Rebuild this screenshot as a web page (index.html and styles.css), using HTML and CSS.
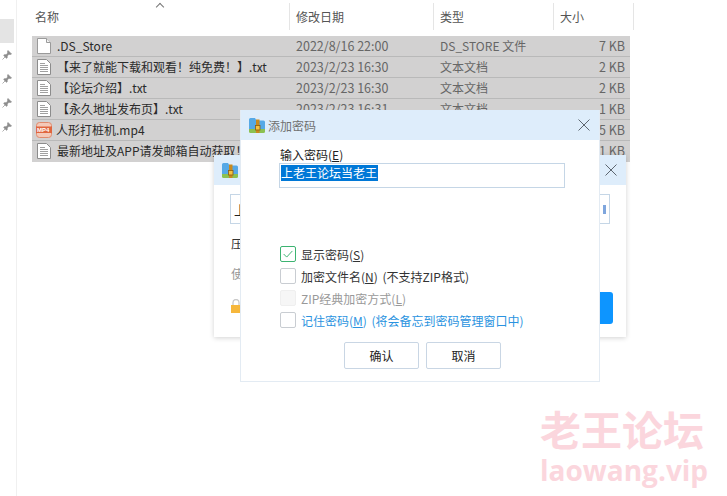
FILE: index.html
```html
<!DOCTYPE html>
<html lang="zh-CN">
<head>
    <meta charset="UTF-8">
    <title>添加密码</title>
    <link rel="stylesheet" href="styles.css">
</head>
<body>
    <svg class="defs" width="0" height="0">
        <symbol id="blank" viewBox="0 0 14 16">
            <path d="M.5.5h9l4 4v11H.5z" fill="#fff" stroke="#9a9a9a"/>
            <path d="M9.5.5v4h4" fill="#f2f2f2" stroke="#9a9a9a"/>
        </symbol>
        <symbol id="txt" viewBox="0 0 14 16">
            <path d="M.5.5h9l4 4v11H.5z" fill="#fff" stroke="#8c8c8c"/>
            <path d="M3 4.500h5M3 6.500h8M3 8.500h8M3 10.500h8M3 12.500h8" stroke="#a0a0a0"/>
        </symbol>
        <symbol id="zip" viewBox="0 0 16 15">
            <path d="M0 1.500Q0 0 1.500 0H6l1.500 2.500H14.500Q16 2.500 16 4v9H0z" fill="#56a9e6"/>
            <path d="M0 11h16v2.500Q16 15 14.500 15H1.500Q0 15 0 13.500z" fill="#8cc152"/>
            <rect x="7" y="1.500" width="3.500" height="13.500" fill="#c98a1e"/>
            <rect x="6.500" y="7.500" width="4.500" height="4.500" fill="#f5c242" stroke="#8a5a10" stroke-width=".8"/>
        </symbol>
        <symbol id="pin" viewBox="0 0 10 10">
            <path d="M6 .5 9.500 4 8.500 4.500 7 4.200 5.200 6 5.200 7.800 4.500 8.300 1.700 5.500 2.200 4.800H4L5.800 3 5.500 1.500zM3 7 .5 9.500" fill="#8d8d8d" stroke="#8d8d8d" stroke-width=".7"/>
        </symbol>
        <symbol id="close" viewBox="0 0 12 12">
            <path d="M.5.5l11 11M11.500.5l-11 11" fill="none" stroke="#5d6670"/>
        </symbol>
    </svg>

    <div class="explorer">
        <aside class="quick-bar">
            <div class="quick-active"></div>
            <svg class="pin"><use href="#pin"/></svg>
            <svg class="pin"><use href="#pin"/></svg>
            <svg class="pin"><use href="#pin"/></svg>
            <svg class="pin"><use href="#pin"/></svg>
        </aside>
        <main class="listing">
            <div class="col-heads">
                <span class="head col-name">名称<i class="sort-arrow"></i></span>
                <span class="head col-date">修改日期</span>
                <span class="head col-type">类型</span>
                <span class="head col-size">大小</span>
            </div>
            <ul class="files">
                <li class="file">
                    <span class="col-name name"><svg class="file-icon"><use href="#blank"/></svg>.DS_Store</span>
                    <span class="col-date">2022/8/16 22:00</span>
                    <span class="col-type">DS_STORE 文件</span>
                    <span class="col-size">7 KB</span>
                </li>
                <li class="file">
                    <span class="col-name name"><svg class="file-icon"><use href="#txt"/></svg>【来了就能下载和观看！纯免费！】.txt</span>
                    <span class="col-date">2023/2/23 16:30</span>
                    <span class="col-type">文本文档</span>
                    <span class="col-size">2 KB</span>
                </li>
                <li class="file">
                    <span class="col-name name"><svg class="file-icon"><use href="#txt"/></svg>【论坛介绍】.txt</span>
                    <span class="col-date">2023/2/23 16:30</span>
                    <span class="col-type">文本文档</span>
                    <span class="col-size">2 KB</span>
                </li>
                <li class="file">
                    <span class="col-name name"><svg class="file-icon"><use href="#txt"/></svg>【永久地址发布页】.txt</span>
                    <span class="col-date">2023/2/23 16:31</span>
                    <span class="col-type">文本文档</span>
                    <span class="col-size">1 KB</span>
                </li>
                <li class="file">
                    <span class="col-name name"><svg class="file-icon mp4-icon" viewBox="0 0 16 16"><rect x=".5" y=".5" width="15" height="15" rx="3" fill="#f4c9b8" stroke="#e08a6c"/><rect x="0" y="4.500" width="16" height="6.500" fill="#e0663f"/></svg><b class="mp4-tag">MP4</b>人形打桩机.mp4</span>
                    <span class="col-date">2023/2/23 16:30</span>
                    <span class="col-type">MP4 文件</span>
                    <span class="col-size">5 KB</span>
                </li>
                <li class="file">
                    <span class="col-name name"><svg class="file-icon"><use href="#txt"/></svg>最新地址及APP请发邮箱自动获取！</span>
                    <span class="col-date">2023/2/23 16:30</span>
                    <span class="col-type">文本文档</span>
                    <span class="col-size">1 KB</span>
                </li>
            </ul>
        </main>
    </div>

    <!-- archive window, mostly hidden behind the password dialog -->
    <section class="window back-window">
        <header class="title-bar">
            <svg class="zip-icon"><use href="#zip"/></svg>
            <svg class="close-icon"><use href="#close"/></svg>
        </header>
        <div class="back-body">
            <div class="back-input"><span>上</span><i class="back-mark"></i></div>
            <p class="back-line">压</p>
            <p class="back-line muted">使</p>
            <div class="back-foot">
                <svg class="lock" viewBox="0 0 10 14"><path d="M2 6V3.500a3 3 0 0 1 6 0V6" fill="none" stroke="#c9c9c9" stroke-width="1.300"/><rect y="6" width="10" height="8" fill="#f6b73c"/></svg>
                <div class="back-btn"></div>
            </div>
        </div>
    </section>

    <section class="window pwd-window">
        <header class="title-bar">
            <svg class="zip-icon"><use href="#zip"/></svg>
            <span class="title">添加密码</span>
            <svg class="close-icon"><use href="#close"/></svg>
        </header>
        <div class="pwd-body">
            <label class="pwd-label">输入密码(<u>E</u>)</label>
            <div class="pwd-input"><span class="selected">上老王论坛当老王</span></div>
            <div class="options">
                <label class="option">
                    <span class="box checked"><svg viewBox="0 0 16 16" width="14" height="14"><path d="M3 8l3.500 3.500L13 4.500" fill="none" stroke="#3cb371" stroke-width="1.100"/></svg></span>
                    <span>显示密码(<u>S</u>)</span>
                </label>
                <label class="option">
                    <span class="box"></span>
                    <span>加密文件名(<u>N</u>) (不支持ZIP格式)</span>
                </label>
                <label class="option disabled">
                    <span class="box"></span>
                    <span>ZIP经典加密方式(<u>L</u>)</span>
                </label>
                <label class="option link">
                    <span class="box"></span>
                    <span>记住密码(<u>M</u>) (将会备忘到密码管理窗口中)</span>
                </label>
            </div>
            <div class="actions">
                <button class="btn">确认</button>
                <button class="btn">取消</button>
            </div>
        </div>
    </section>

    <div class="stamp">
        <div class="stamp-cn">老王论坛</div>
        <div class="stamp-en">laowang.vip</div>
    </div>
</body>
</html>
```

FILE: styles.css
```css
* {
    box-sizing: border-box;
}
html, body {
    height: 100%;
}
body {
    margin: 0;
    background: #fff;
    font-family: "Noto Sans CJK SC", "Noto Sans", sans-serif;
    font-size: 12px;
    color: #333;
    overflow: hidden;
    position: relative;
}
.defs {
    position: absolute;
}

/* explorer behind the dialogs */
.explorer {
    display: flex;
    height: 100%;
}
.quick-bar {
    width: 17px;
    padding-top: 19px;
    border-right: 1px solid #f0f0f0;
    display: flex;
    flex-direction: column;
    flex-shrink: 0;
}
.quick-active {
    width: 14px;
    height: 24px;
    background: #e4e4e4;
    margin-bottom: 7px;
}
.pin {
    width: 10px;
    height: 10px;
    margin: 0 0 14px 2px;
}
.listing {
    margin-left: 15px;
    width: 602px;
}
.col-heads {
    display: flex;
    height: 36px;
    padding-top: 3px;
}
.head {
    position: relative;
    height: 27px;
    line-height: 28px;
    border-right: 1px solid #e5e5e5;
    color: #555;
}
.col-name {
    width: 258px;
    flex-shrink: 0;
}
.col-date {
    width: 144px;
    padding-left: 6px;
    flex-shrink: 0;
}
.col-type {
    width: 120px;
    padding-left: 6px;
    flex-shrink: 0;
}
.col-size {
    width: 80px;
    padding-left: 6px;
    flex-shrink: 0;
}
.head.col-name {
    padding-left: 3px;
}
.sort-arrow {
    position: absolute;
    left: 125px;
    top: 1px;
    width: 6px;
    height: 6px;
    border-left: 1px solid #777;
    border-top: 1px solid #777;
    transform: rotate(45deg);
}
.files {
    list-style: none;
    margin: 0;
    padding: 0;
    width: 598px;
}
.file {
    display: flex;
    height: 21px;
    line-height: 20px;
    background: #d2d1d1;
    border-bottom: 1px solid #b9b9b9;
    color: #666;
}
.file:last-child {
    border-bottom: 0;
}
.file .col-date {
    font-size: 12.500px;
}
.file .col-size {
    width: 76px;
    padding: 0 5px 0 0;
    font-size: 12.500px;
    text-align: right;
}
.name {
    display: flex;
    align-items: center;
    height: 20px;
    color: #2b2b2b;
    position: relative;
}
.file-icon {
    width: 14px;
    height: 16px;
    margin: 0 6px 0 5px;
    flex-shrink: 0;
}
.mp4-icon {
    width: 16px;
    margin: 0 4px 0 4px;
}
.mp4-tag {
    position: absolute;
    left: 5px;
    font-family: "Liberation Sans", sans-serif;
    font-size: 6px;
    line-height: 8px;
    color: #fff;
}

/* dialogs */
.window {
    position: absolute;
    background: #fff;
}
.back-window {
    left: 214px;
    top: 155px;
    width: 412px;
    height: 182px;
    box-shadow: 0 1px 5px rgba(0, 0, 0, 0.18);
}
.pwd-window {
    left: 240px;
    top: 110px;
    width: 360px;
    height: 272px;
    border: 1px solid #e3ebf3;
    border-top: 0;
}
.title-bar {
    display: flex;
    align-items: center;
    height: 30px;
    padding: 0 9px 0 8px;
    background: #deedfb;
}
.zip-icon {
    width: 16px;
    height: 15px;
}
.title {
    margin-left: 3px;
    font-size: 12px;
    color: #707070;
}
.close-icon {
    width: 12px;
    height: 12px;
    margin-left: auto;
}
.back-body {
    padding: 9px 16px 0;
}
.back-input {
    display: flex;
    justify-content: space-between;
    align-items: center;
    height: 30px;
    border: 1px solid #c5d6e6;
    padding: 0 1px 0 3px;
    font-size: 13px;
    color: #222;
}
.back-mark {
    width: 3px;
    height: 9px;
    background: #7fa6dd;
    margin-right: 2px;
}
.back-line {
    margin: 10px 0 0 1px;
    line-height: 19px;
    font-size: 12.500px;
}
.back-line.muted {
    margin-top: 11px;
    color: #999;
}
.back-foot {
    display: flex;
    justify-content: space-between;
    margin: 0 -3px 0 1px;
}
.lock {
    width: 10px;
    height: 14px;
    margin-top: 16px;
}
.back-btn {
    width: 40px;
    height: 32px;
    margin-top: 9px;
    border-radius: 3px;
    background: #0d95ff;
}

.pwd-body {
    padding: 6px 34px 0 39px;
}
.pwd-label {
    display: block;
    line-height: 18px;
    font-size: 12px;
    color: #222;
}
.pwd-input {
    height: 25px;
    margin: -1px 0 0 -1px;
    padding: 1px;
    border: 1px solid #c5d6e6;
    line-height: 15px;
}
.selected {
    display: inline-block;
    height: 16px;
    background: #0078d7;
    color: #fff;
    font-size: 12px;
    padding: 0 1px 0 0;
    line-height: 16px;
}
.options {
    margin-top: 58px;
}
.option {
    display: flex;
    align-items: center;
    gap: 5px;
    height: 16px;
    margin-bottom: 6px;
    white-space: pre;
    word-spacing: 2px;
    color: #333;
}
.box {
    width: 16px;
    height: 16px;
    border: 1px solid #c9cdd2;
    border-radius: 2px;
    background: #fff;
    display: flex;
    align-items: center;
    justify-content: center;
    flex-shrink: 0;
}
.box.checked {
    border-color: #3cb371;
}
.disabled {
    color: #999;
}
.disabled .box {
    background: #f6f6f6;
    border-color: #efefef;
}
.link {
    color: #2a93e0;
}
.actions {
    display: flex;
    gap: 7px;
    margin: 14px 0 0 64px;
}
.btn {
    width: 75px;
    height: 27px;
    padding: 0;
    border: 1px solid #c9d6e4;
    border-radius: 2px;
    background: #fff;
    font: inherit;
    color: #222;
}

/* site mark in the corner */
.stamp {
    position: absolute;
    left: 540px;
    top: 402px;
    color: #fbd6dd;
    font-weight: 700;
}
.stamp-cn {
    font-size: 41px;
    line-height: 52px;
    letter-spacing: 0;
}
.stamp-en {
    font-family: "Open Sans", sans-serif;
    font-size: 28px;
    line-height: 32px;
}
```
